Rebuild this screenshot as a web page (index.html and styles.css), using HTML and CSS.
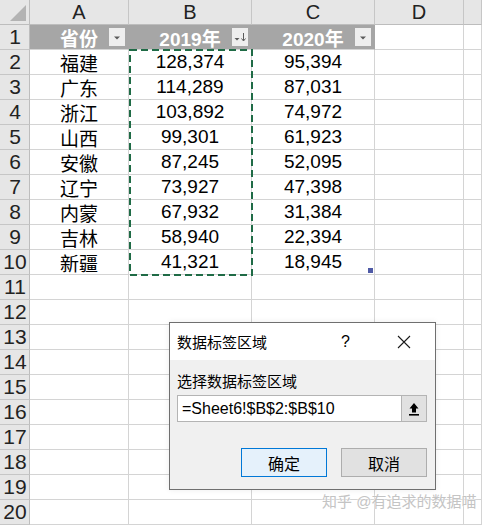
FILE: index.html
```html
<!DOCTYPE html>
<html lang="zh">
<head>
<meta charset="utf-8">
<title>Sheet</title>
<link rel="stylesheet" href="styles.css">
</head>
<body>
<div class="sheet">
  <div class="corner"><span class="corner-tri"></span></div>
  <div class="colhead">A</div>
  <div class="colhead">B</div>
  <div class="colhead">C</div>
  <div class="colhead">D</div>
  <div class="colhead"></div>

  <div class="rowhead">1</div>
  <div class="cell th">省份<span class="filter"><svg width="16" height="18" viewBox="0 0 16 18"><path d="M5 8.5h6l-3 3z" fill="#5a5a5a"/></svg></span></div>
  <div class="cell th">2019年<span class="filter"><svg width="16" height="18" viewBox="0 0 16 18"><path d="M2.5 10h5l-2.5 2.5z" fill="#5a5a5a"/><path d="M11.5 5v7.5" stroke="#5a5a5a" stroke-width="1"/><path d="M9.5 10.5l2 2.5 2-2.5" fill="none" stroke="#5a5a5a" stroke-width="1"/></svg></span></div>
  <div class="cell th">2020年<span class="filter"><svg width="16" height="18" viewBox="0 0 16 18"><path d="M5 8.5h6l-3 3z" fill="#5a5a5a"/></svg></span></div>
  <div class="cell"></div>
  <div class="cell"></div>

  <div class="rowhead">2</div><div class="cell">福建</div><div class="cell">128,374</div><div class="cell">95,394</div><div class="cell"></div><div class="cell"></div>
  <div class="rowhead">3</div><div class="cell">广东</div><div class="cell">114,289</div><div class="cell">87,031</div><div class="cell"></div><div class="cell"></div>
  <div class="rowhead">4</div><div class="cell">浙江</div><div class="cell">103,892</div><div class="cell">74,972</div><div class="cell"></div><div class="cell"></div>
  <div class="rowhead">5</div><div class="cell">山西</div><div class="cell">99,301</div><div class="cell">61,923</div><div class="cell"></div><div class="cell"></div>
  <div class="rowhead">6</div><div class="cell">安徽</div><div class="cell">87,245</div><div class="cell">52,095</div><div class="cell"></div><div class="cell"></div>
  <div class="rowhead">7</div><div class="cell">辽宁</div><div class="cell">73,927</div><div class="cell">47,398</div><div class="cell"></div><div class="cell"></div>
  <div class="rowhead">8</div><div class="cell">内蒙</div><div class="cell">67,932</div><div class="cell">31,384</div><div class="cell"></div><div class="cell"></div>
  <div class="rowhead">9</div><div class="cell">吉林</div><div class="cell">58,940</div><div class="cell">22,394</div><div class="cell"></div><div class="cell"></div>
  <div class="rowhead">10</div><div class="cell">新疆</div><div class="cell">41,321</div><div class="cell last">18,945<span class="handle"></span></div><div class="cell"></div><div class="cell"></div>
  <div class="rowhead">11</div><div class="cell"></div><div class="cell"></div><div class="cell"></div><div class="cell"></div><div class="cell"></div>
  <div class="rowhead">12</div><div class="cell"></div><div class="cell"></div><div class="cell"></div><div class="cell"></div><div class="cell"></div>
  <div class="rowhead">13</div><div class="cell"></div><div class="cell"></div><div class="cell"></div><div class="cell"></div><div class="cell"></div>
  <div class="rowhead">14</div><div class="cell"></div><div class="cell"></div><div class="cell"></div><div class="cell"></div><div class="cell"></div>
  <div class="rowhead">15</div><div class="cell"></div><div class="cell"></div><div class="cell"></div><div class="cell"></div><div class="cell"></div>
  <div class="rowhead">16</div><div class="cell"></div><div class="cell"></div><div class="cell"></div><div class="cell"></div><div class="cell"></div>
  <div class="rowhead">17</div><div class="cell"></div><div class="cell"></div><div class="cell"></div><div class="cell"></div><div class="cell"></div>
  <div class="rowhead">18</div><div class="cell"></div><div class="cell"></div><div class="cell"></div><div class="cell"></div><div class="cell"></div>
  <div class="rowhead">19</div><div class="cell"></div><div class="cell"></div><div class="cell"></div><div class="cell"></div><div class="cell"></div>
  <div class="rowhead">20</div><div class="cell"></div><div class="cell"></div><div class="cell"></div><div class="cell"></div><div class="cell"></div>

  <svg class="marquee" width="124" height="227" viewBox="0 0 124 227"><rect x="1" y="1" width="122" height="225" fill="none" stroke="#1f6b46" stroke-width="2" stroke-dasharray="7 4"/></svg>

  <div class="dialog">
    <div class="dlg-title">
      <span class="dlg-name">数据标签区域</span>
      <span class="dlg-help">?</span>
      <svg class="dlg-close" width="14" height="14" viewBox="0 0 14 14"><path d="M1 1l12 12M13 1L1 13" stroke="#1a1a1a" stroke-width="1.1"/></svg>
    </div>
    <div class="dlg-body">
      <div class="dlg-label">选择数据标签区域</div>
      <div class="dlg-input">
        <span class="dlg-text">=Sheet6!$B$2:$B$10</span>
        <span class="dlg-collapse"><svg width="12" height="14" viewBox="0 0 12 14"><path d="M6 1L1.5 6.5H4v4h4v-4h2.5z" fill="#000"/><rect x="1" y="12" width="10" height="1.6" fill="#000"/></svg></span>
      </div>
      <div class="dlg-buttons">
        <span class="btn btn-primary">确定</span>
        <span class="btn">取消</span>
      </div>
    </div>
  </div>

  <div class="watermark">知乎 @有追求的数据喵</div>
</div>
</body>
</html>
```

FILE: styles.css
```css
html, body {
  margin: 0;
  padding: 0;
  background: #ffffff;
  overflow: hidden;
}
body {
  font-family: "Liberation Sans", "Noto Sans CJK SC", sans-serif;
  color: #000;
}
.sheet {
  position: relative;
  display: grid;
  grid-template-columns: 30px 99px 123px 123px 89px 18px;
  grid-auto-rows: 25px;
  width: 482px;
  height: 525px;
}
.corner {
  position: relative;
  background: #e6e6e6;
  border-right: 1px solid #bdbdbd;
  border-bottom: 1px solid #bdbdbd;
  box-sizing: border-box;
}
.corner-tri {
  position: absolute;
  right: 3px;
  bottom: 3px;
  width: 0;
  height: 0;
  border-left: 16px solid transparent;
  border-bottom: 16px solid #b3b3b3;
}
.colhead {
  background: #e6e6e6;
  border-right: 1px solid #c6c6c6;
  border-bottom: 1px solid #bdbdbd;
  box-sizing: border-box;
  display: flex;
  align-items: center;
  justify-content: center;
  font-size: 20px;
  color: #222;
}
.rowhead {
  background: #e6e6e6;
  border-right: 1px solid #bdbdbd;
  border-bottom: 1px solid #c6c6c6;
  box-sizing: border-box;
  display: flex;
  align-items: center;
  justify-content: center;
  font-size: 21px;
  color: #222;
  padding-left: 1px;
}
.cell {
  position: relative;
  border-right: 1px solid #d4d4d4;
  border-bottom: 1px solid #d4d4d4;
  box-sizing: border-box;
  display: flex;
  align-items: center;
  justify-content: center;
  font-size: 19px;
  white-space: nowrap;
}
.cell.th {
  background: #a6a6a6;
  border-right-color: #a6a6a6;
  color: #ffffff;
  font-weight: bold;
  font-size: 19px;
}
.filter {
  position: absolute;
  right: 3px;
  top: 3px;
  width: 16px;
  height: 18px;
  background: #eeeeee;
  display: flex;
}
.handle {
  position: absolute;
  right: 1px;
  bottom: 1px;
  width: 5px;
  height: 5px;
  background: #4f5aa6;
}
.marquee {
  position: absolute;
  left: 129px;
  top: 49px;
}
.dialog {
  position: absolute;
  left: 169px;
  top: 322px;
  width: 267px;
  height: 168px;
  box-sizing: border-box;
  border: 1px solid #6f6f6f;
  background: #f0f0f0;
  display: flex;
  flex-direction: column;
  font-size: 15px;
  box-shadow: 0 0 6px rgba(0,0,0,0.08);
}
.dlg-title {
  height: 37px;
  background: #ffffff;
  display: flex;
  align-items: center;
  padding-left: 7px;
  flex-shrink: 0;
}
.dlg-name {
  flex: 1;
  font-size: 15px;
}
.dlg-help {
  font-size: 16px;
  margin-right: 47px;
}
.dlg-close {
  margin-right: 24px;
}
.dlg-body {
  display: flex;
  flex-direction: column;
  padding: 12px 8px 0 7px;
}
.dlg-label {
  height: 20px;
  line-height: 20px;
  font-size: 15px;
}
.dlg-input {
  margin-top: 3px;
  height: 27px;
  box-sizing: border-box;
  background: #ffffff;
  border: 1px solid #b4b4b4;
  display: flex;
  align-items: center;
  width: 250px;
}
.dlg-text {
  flex: 1;
  font-size: 16px;
  padding-left: 4px;
}
.dlg-collapse {
  width: 24px;
  height: 25px;
  background: #e1e1e1;
  border-left: 1px solid #b4b4b4;
  display: flex;
  align-items: center;
  justify-content: center;
}
.dlg-buttons {
  display: flex;
  justify-content: flex-end;
  gap: 14px;
  margin-top: 26px;
  width: 250px;
}
.btn {
  width: 86px;
  height: 29px;
  box-sizing: border-box;
  border: 1px solid #adadad;
  background: #e1e1e1;
  display: flex;
  align-items: center;
  justify-content: center;
  font-size: 16px;
}
.btn-primary {
  border-color: #0078d7;
  background: #e5f1fb;
}
.watermark {
  position: absolute;
  left: 322px;
  top: 490px;
  font-size: 15px;
  color: #c4c4c4;
  white-space: nowrap;
  text-shadow: 0 0 2px #ffffff, 0 0 1px #ffffff;
}
```
